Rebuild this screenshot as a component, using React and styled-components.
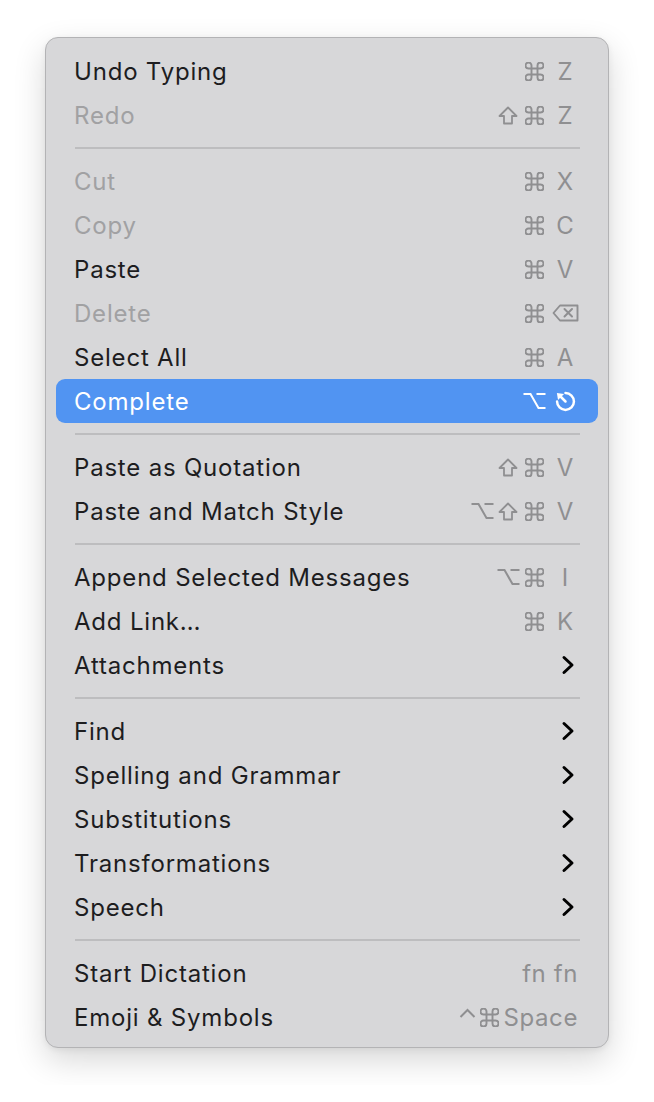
import React from "react";
import styled, { createGlobalStyle } from "styled-components";

const Global = createGlobalStyle`
  html, body { margin: 0; padding: 0; background: #ffffff; }
  body { font-family: Inter, "Liberation Sans", sans-serif; -webkit-font-smoothing: antialiased; }
`;

const Page = styled.div`
  padding: 37px 45px;
  display: flex;
`;

const Menu = styled.div`
  width: 564px;
  box-sizing: border-box;
  background: #d7d7d9;
  border: 1px solid #b3b3b5;
  border-radius: 13px;
  padding: 11px 10px 8px;
  box-shadow: 0 12px 32px rgba(0, 0, 0, 0.16), 0 2px 6px rgba(0, 0, 0, 0.06);
  display: flex;
  flex-direction: column;
`;

const Row = styled.div`
  height: 44px;
  display: flex;
  align-items: center;
  justify-content: space-between;
  padding: 0 19px 0 18px;
  border-radius: 9px;
  background: ${(p) => (p.$active ? "#5194f2" : "transparent")};
  color: ${(p) => (p.$active ? "#ffffff" : p.$disabled ? "#a1a1a3" : "#1d1d1f")};
`;

const Label = styled.span`
  font-size: 24px;
  letter-spacing: 0.8px;
  white-space: nowrap;
`;

const Separator = styled.div`
  height: 22px;
  display: flex;
  align-items: center;
  padding: 0 18px 0 19px;
  &::after {
    content: "";
    flex: 1;
    height: 2px;
    background: #bdbdbf;
  }
`;

const Shortcut = styled.div`
  display: flex;
  align-items: center;
  color: ${(p) => (p.$active ? "#ffffff" : "#8f8f91")};
`;

const Mod = styled.span`
  width: 26px;
  height: 24px;
  display: flex;
  align-items: center;
  justify-content: center;
`;

const Key = styled.span`
  width: 28px;
  margin-left: 4px;
  display: flex;
  align-items: center;
  justify-content: center;
  font-size: 24px;
`;

const TextShortcut = styled.span`
  display: flex;
  align-items: center;
  font-size: 24px;
  letter-spacing: 0.6px;
  white-space: nowrap;
  margin-right: 1px;
`;

const GlyphGap = styled.span`
  display: flex;
  margin: 0 4px 0 4px;
`;

const Chevron = styled.svg`
  width: 14px;
  height: 20px;
  margin-right: 4px;
`;

const Icon = styled.svg`
  width: ${(p) => p.$w}px;
  height: ${(p) => p.$h}px;
  display: block;
`;

function Esc() {
  return (
    <Icon $w={23} $h={23} viewBox="0 0 24 24" fill="none" stroke="#fff">
      <path d="M12 3.2 A8.8 8.8 0 1 1 3.2 12" strokeWidth="2.6" strokeLinecap="round" />
      <path d="M12 12 L6 6" strokeWidth="2.6" strokeLinecap="round" />
      <path d="M3 3 L10.5 4.2 L4.2 10.5 Z" fill="#fff" stroke="none" />
    </Icon>
  );
}

function Shift() {
  return (
    <Icon $w={20} $h={19} viewBox="0 0 20 19" fill="none" stroke="currentColor">
      <path d="M10 1.5 L18.5 10 L14 10 L14 17.5 L6 17.5 L6 10 L1.5 10 Z" strokeWidth="1.8" strokeLinejoin="round" />
    </Icon>
  );
}

function Option() {
  return (
    <Icon $w={23} $h={18} viewBox="0 0 23 18" fill="none" stroke="currentColor">
      <path d="M0.5 2 H7.5 L15.5 16 H22.5 M13.5 2 H22.5" strokeWidth="2" />
    </Icon>
  );
}

function Command() {
  return (
    <Icon $w={19} $h={19} viewBox="-0.5 -0.5 19 19" fill="none" stroke="currentColor">
      <path
        d="M6 6 V3 A3 3 0 1 0 3 6 H15 A3 3 0 1 0 12 3 V15 A3 3 0 1 0 15 12 H3 A3 3 0 1 0 6 15 Z"
        strokeWidth="1.9"
        strokeLinejoin="round"
      />
    </Icon>
  );
}

function Control() {
  return (
    <Icon $w={17} $h={20} viewBox="0 0 17 20" fill="none" stroke="currentColor">
      <path d="M1.5 10 L8.5 3 L15.5 10" strokeWidth="2" strokeLinejoin="miter" />
    </Icon>
  );
}

function Backspace() {
  return (
    <Icon $w={27} $h={18} viewBox="0 0 27 18" fill="none" stroke="currentColor">
      <path d="M8 1.5 H25.5 V16.5 H8 L1.5 9 Z" strokeWidth="1.9" strokeLinejoin="round" />
      <path d="M12.5 5 L20 12.5 M20 5 L12.5 12.5" strokeWidth="2" strokeLinecap="round" />
    </Icon>
  );
}

const modGlyph = (m) =>
  m === "⇧" ? <Shift /> : m === "⌥" ? <Option /> : m === "⌘" ? <Command /> : m;

const items = [
  { label: "Undo Typing", mods: ["⌘"], key: "Z" },
  { label: "Redo", disabled: true, mods: ["⇧", "⌘"], key: "Z" },
  { sep: true },
  { label: "Cut", disabled: true, mods: ["⌘"], key: "X" },
  { label: "Copy", disabled: true, mods: ["⌘"], key: "C" },
  { label: "Paste", mods: ["⌘"], key: "V" },
  { label: "Delete", disabled: true, mods: ["⌘"], backspace: true },
  { label: "Select All", mods: ["⌘"], key: "A" },
  { label: "Complete", active: true, mods: ["⌥"], esc: true },
  { sep: true },
  { label: "Paste as Quotation", mods: ["⇧", "⌘"], key: "V" },
  { label: "Paste and Match Style", mods: ["⌥", "⇧", "⌘"], key: "V" },
  { sep: true },
  { label: "Append Selected Messages", mods: ["⌥", "⌘"], key: "I" },
  { label: "Add Link…", mods: ["⌘"], key: "K" },
  { label: "Attachments", sub: true },
  { sep: true },
  { label: "Find", sub: true },
  { label: "Spelling and Grammar", sub: true },
  { label: "Substitutions", sub: true },
  { label: "Transformations", sub: true },
  { label: "Speech", sub: true },
  { sep: true },
  { label: "Start Dictation", text: "fn fn" },
  { label: "Emoji & Symbols", emoji: true },
];

function Right({ it }) {
  if (it.sub) {
    return (
      <Chevron viewBox="0 0 14 20" fill="none">
        <path d="M3 2.5 L11 10 L3 17.5" stroke="#000" strokeWidth="3" strokeLinecap="round" strokeLinejoin="round" />
      </Chevron>
    );
  }
  if (it.text) {
    return (
      <Shortcut>
        <TextShortcut>{it.text}</TextShortcut>
      </Shortcut>
    );
  }
  if (it.emoji) {
    return (
      <Shortcut>
        <TextShortcut>
          <Control />
          <GlyphGap>
            <Command />
          </GlyphGap>
          Space
        </TextShortcut>
      </Shortcut>
    );
  }
  if (it.mods) {
    return (
      <Shortcut $active={it.active}>
        {it.mods.map((m, i) => (
          <Mod key={i}>{modGlyph(m)}</Mod>
        ))}
        <Key>{it.esc ? <Esc /> : it.backspace ? <Backspace /> : it.key}</Key>
      </Shortcut>
    );
  }
  return null;
}

export default function App() {
  return (
    <>
      <Global />
      <Page>
        <Menu>
          {items.map((it, i) =>
            it.sep ? (
              <Separator key={i} />
            ) : (
              <Row key={i} $active={it.active} $disabled={it.disabled}>
                <Label>{it.label}</Label>
                <Right it={it} />
              </Row>
            )
          )}
        </Menu>
      </Page>
    </>
  );
}
